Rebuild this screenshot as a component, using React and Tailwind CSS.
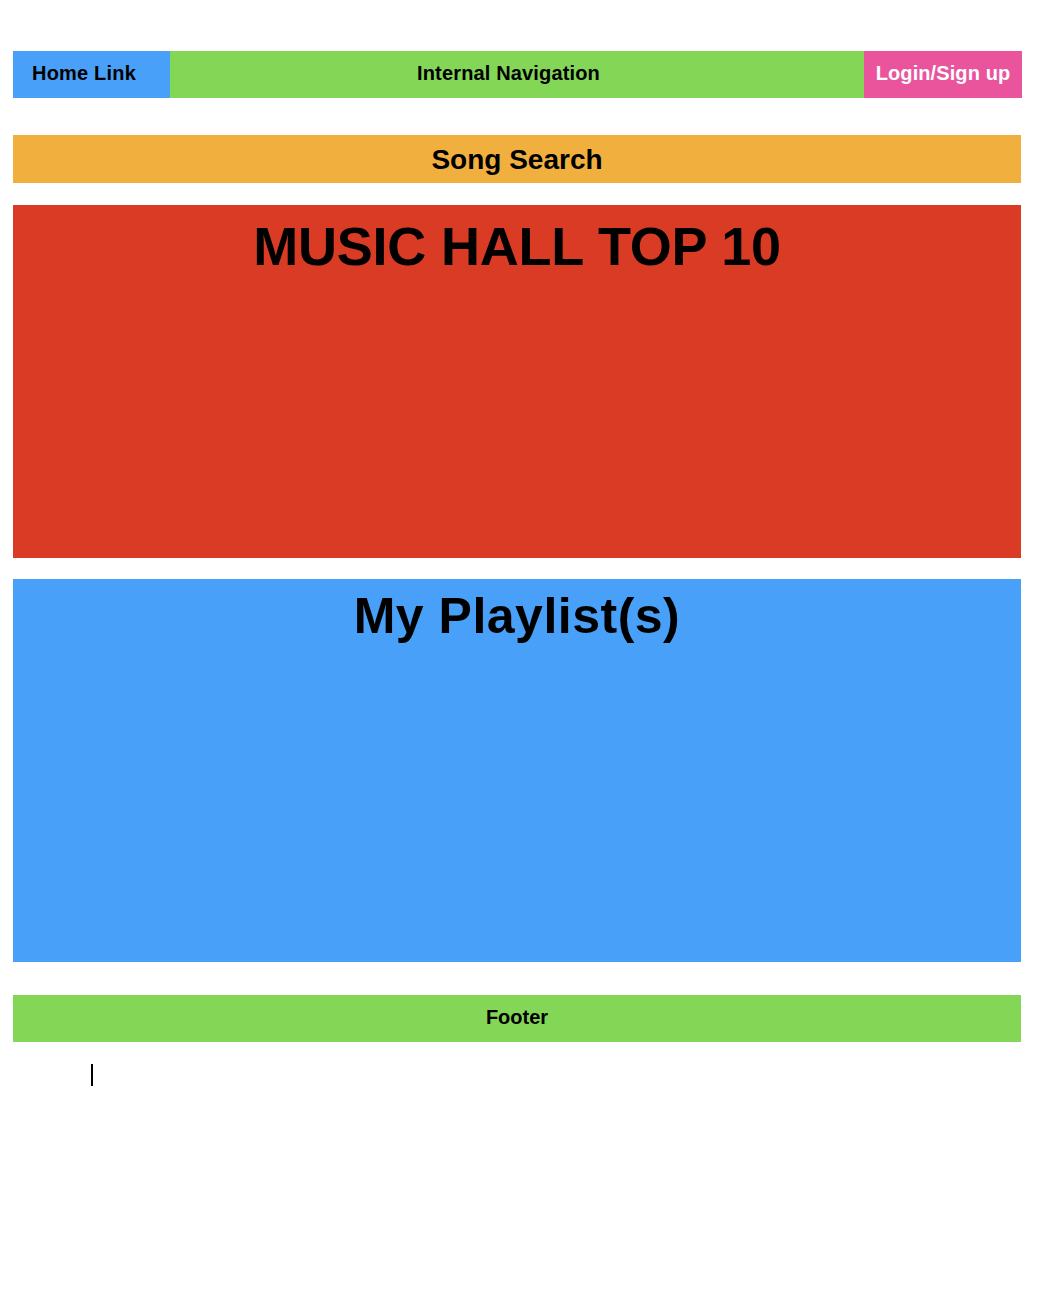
export default function App() {
  const font = { fontFamily: '"Liberation Sans", Arial, Helvetica, sans-serif' };
  return (
    <div className="min-h-[1296px] bg-white text-black" style={font}>
      <div className="flex flex-col pt-[51px] pl-[13px]">
        <nav className="flex h-[47px] w-[1009px] font-bold text-[20px]">
          <div className="flex w-[157px] items-center bg-[#49a0f8] pl-[19px] pb-[3px] tracking-[0.2px]">Home Link</div>
          <div className="flex flex-1 items-center justify-center bg-[#84d656] pr-[17px] pb-[3px] tracking-[0.15px]">Internal Navigation</div>
          <div className="flex w-[158px] items-center justify-center bg-[#e9549d] pb-[3px] text-white tracking-[0.1px]">Login/Sign up</div>
        </nav>

        <div className="mt-[37px] flex h-[48px] w-[1008px] items-center justify-center bg-[#f1b03d] pt-[2px] text-[28px] font-bold">
          Song Search
        </div>

        <section className="mt-[22px] h-[353px] w-[1008px] bg-[#da3b25] pt-[14px] text-center">
          <h1 className="text-[54px] font-bold leading-none tracking-[-0.2px]">MUSIC HALL TOP 10</h1>
        </section>

        <section className="mt-[21px] h-[383px] w-[1008px] bg-[#49a0f8] pt-[12px] text-center">
          <h2 className="text-[50px] font-bold leading-none tracking-[0.5px]">My Playlist(s)</h2>
        </section>

        <footer className="mt-[33px] flex h-[47px] w-[1008px] items-center justify-center bg-[#84d656] pb-[3px] text-[20px] font-bold">
          Footer
        </footer>

        <div className="mt-[22px] ml-[78px] h-[22px] w-[2px] bg-black" />
      </div>
    </div>
  );
}
